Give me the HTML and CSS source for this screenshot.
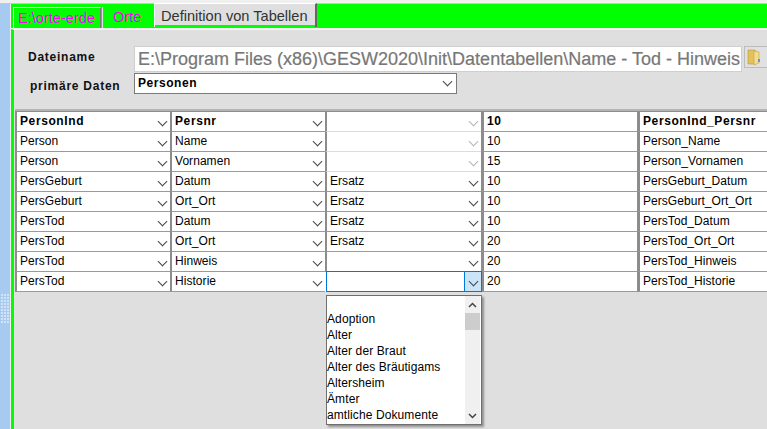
FILE: index.html
```html
<!DOCTYPE html>
<html lang="de">
<head>
    <meta charset="UTF-8">
    <meta name="viewport" content="width=device-width, initial-scale=1.0">
    <title>Definition von Tabellen</title>
    <link rel="stylesheet" href="styles.css">
</head>
<body>

<div class="fenster">
    <aside class="seitenleiste">
        <div class="griff">
            <i></i><i></i><i></i><i></i><i></i><i></i><i></i><i></i><i></i><i></i>
            <i></i><i></i><i></i><i></i><i></i><i></i><i></i><i></i><i></i><i></i>
            <i></i><i></i><i></i><i></i><i></i><i></i><i></i><i></i><i></i><i></i>
        </div>
    </aside>

    <main class="inhalt">
        <nav class="reiter-leiste">
            <div class="reiter reiter-pink reiter-eins">E:\orte-erde</div>
            <div class="reiter reiter-pink reiter-zwei">Orte</div>
            <div class="reiter reiter-aktiv">Definition von Tabellen</div>
        </nav>

        <section class="seite">
            <!-- Kopfbereich -->
            <div class="kopf">
                <div class="kopf-zeile zeile-datei">
                    <label class="kopf-label label-datei">Dateiname</label>
                    <div class="dateiname">E:\Program Files (x86)\GESW2020\Init\Datentabellen\Name - Tod - Hinweis</div>
                    <button class="ordner-knopf" type="button">
                        <svg width="14" height="18" viewBox="0 0 14 18">
                            <path d="M1 2h7l1 1v13H1z" fill="#e3c25c" stroke="#b8963a" stroke-width="0.6"/>
                            <path d="M7 3l5 1v11l-5 2z" fill="#f3dc8c" stroke="#c2a24a" stroke-width="0.6"/>
                            <rect x="11" y="11" width="2" height="3" fill="#5b9bd5"/>
                        </svg>
                    </button>
                </div>
                <div class="kopf-zeile zeile-daten">
                    <label class="kopf-label label-daten">primäre Daten</label>
                    <div class="haupt-combo">
                        <span>Personen</span>
                        <span class="haupt-knopf"></span>
                    </div>
                </div>
            </div>

            <!-- Tabelle -->
            <div class="tabelle">
                <div class="zelle kopfzeile"><span class="zelltext">PersonInd</span><span class="zell-knopf"></span></div>
                <div class="zelle kopfzeile"><span class="zelltext">Persnr</span><span class="zell-knopf"></span></div>
                <div class="zelle kopfzeile inaktiv"><span class="zelltext"></span><span class="zell-knopf"></span></div>
                <div class="zelle kopfzeile"><span class="zelltext">10</span></div>
                <div class="zelle kopfzeile"><span class="zelltext">PersonInd_Persnr</span></div>

                <div class="zelle"><span class="zelltext">Person</span><span class="zell-knopf"></span></div>
                <div class="zelle"><span class="zelltext">Name</span><span class="zell-knopf"></span></div>
                <div class="zelle inaktiv"><span class="zelltext"></span><span class="zell-knopf"></span></div>
                <div class="zelle"><span class="zelltext">10</span></div>
                <div class="zelle"><span class="zelltext">Person_Name</span></div>

                <div class="zelle"><span class="zelltext">Person</span><span class="zell-knopf"></span></div>
                <div class="zelle"><span class="zelltext">Vornamen</span><span class="zell-knopf"></span></div>
                <div class="zelle inaktiv"><span class="zelltext"></span><span class="zell-knopf"></span></div>
                <div class="zelle"><span class="zelltext">15</span></div>
                <div class="zelle"><span class="zelltext">Person_Vornamen</span></div>

                <div class="zelle"><span class="zelltext">PersGeburt</span><span class="zell-knopf"></span></div>
                <div class="zelle"><span class="zelltext">Datum</span><span class="zell-knopf"></span></div>
                <div class="zelle"><span class="zelltext">Ersatz</span><span class="zell-knopf"></span></div>
                <div class="zelle"><span class="zelltext">10</span></div>
                <div class="zelle"><span class="zelltext">PersGeburt_Datum</span></div>

                <div class="zelle"><span class="zelltext">PersGeburt</span><span class="zell-knopf"></span></div>
                <div class="zelle"><span class="zelltext">Ort_Ort</span><span class="zell-knopf"></span></div>
                <div class="zelle"><span class="zelltext">Ersatz</span><span class="zell-knopf"></span></div>
                <div class="zelle"><span class="zelltext">10</span></div>
                <div class="zelle"><span class="zelltext">PersGeburt_Ort_Ort</span></div>

                <div class="zelle"><span class="zelltext">PersTod</span><span class="zell-knopf"></span></div>
                <div class="zelle"><span class="zelltext">Datum</span><span class="zell-knopf"></span></div>
                <div class="zelle"><span class="zelltext">Ersatz</span><span class="zell-knopf"></span></div>
                <div class="zelle"><span class="zelltext">10</span></div>
                <div class="zelle"><span class="zelltext">PersTod_Datum</span></div>

                <div class="zelle"><span class="zelltext">PersTod</span><span class="zell-knopf"></span></div>
                <div class="zelle"><span class="zelltext">Ort_Ort</span><span class="zell-knopf"></span></div>
                <div class="zelle"><span class="zelltext">Ersatz</span><span class="zell-knopf"></span></div>
                <div class="zelle"><span class="zelltext">20</span></div>
                <div class="zelle"><span class="zelltext">PersTod_Ort_Ort</span></div>

                <div class="zelle"><span class="zelltext">PersTod</span><span class="zell-knopf"></span></div>
                <div class="zelle"><span class="zelltext">Hinweis</span><span class="zell-knopf"></span></div>
                <div class="zelle"><span class="zelltext"></span><span class="zell-knopf"></span></div>
                <div class="zelle"><span class="zelltext">20</span></div>
                <div class="zelle"><span class="zelltext">PersTod_Hinweis</span></div>

                <div class="zelle"><span class="zelltext">PersTod</span><span class="zell-knopf"></span></div>
                <div class="zelle"><span class="zelltext">Historie</span><span class="zell-knopf"></span></div>
                <div class="zelle offen"><span class="zelltext"></span><span class="zell-knopf"></span></div>
                <div class="zelle"><span class="zelltext">20</span></div>
                <div class="zelle"><span class="zelltext">PersTod_Historie</span></div>
            </div>

            <!-- Aufgeklappte Liste -->
            <div class="liste">
                <div class="liste-eintraege">
                    <div class="eintrag eintrag-leer"></div>
                    <div class="eintrag">Adoption</div>
                    <div class="eintrag">Alter</div>
                    <div class="eintrag">Alter der Braut</div>
                    <div class="eintrag">Alter des Bräutigams</div>
                    <div class="eintrag">Altersheim</div>
                    <div class="eintrag">Ämter</div>
                    <div class="eintrag">amtliche Dokumente</div>
                </div>
                <div class="rollbalken">
                    <svg class="roll-pfeil" width="9" height="6" viewBox="0 0 9 6"><path d="M1 5l3.5-3.5L8 5" fill="none" stroke="#444" stroke-width="1.5"/></svg>
                    <div class="roll-daumen"></div>
                    <svg class="roll-pfeil roll-unten" width="9" height="6" viewBox="0 0 9 6"><path d="M1 1l3.5 3.5L8 1" fill="none" stroke="#444" stroke-width="1.5"/></svg>
                </div>
            </div>
        </section>
    </main>
</div>

</body>
</html>
```

FILE: styles.css
```css
* {
    box-sizing: border-box;
}
html, body {
    margin: 0;
    padding: 0;
    height: 100%;
    overflow: hidden;
}
body {
    font-family: 'Liberation Sans', Arial, sans-serif;
    font-size: 12px;
    color: #000;
    background: #f0f0f0;
}
.fenster {
    display: flex;
    width: 767px;
    height: 429px;
    padding-top: 3px;
}
.seitenleiste {
    width: 10px;
    background: #a6caf0;
    border-top: 1px solid #c8c8c8;
    display: flex;
    align-items: flex-start;
    justify-content: center;
    padding-top: 290px;
}
.griff {
    display: grid;
    grid-template-columns: 2px 2px 2px;
    gap: 1px;
}
.griff i {
    width: 2px;
    height: 2px;
    background: #d3e3f6;
}
.inhalt {
    flex: 1;
    min-width: 0;
    display: flex;
    flex-direction: column;
    background: #f0f0f0;
    padding-left: 1px;
    border-top: 1px solid #c8c8c8;
}
.reiter-leiste {
    height: 24px;
    background: #00ff00;
    display: flex;
    align-items: flex-start;
    padding-left: 2px;
    flex-shrink: 0;
}
.reiter {
    font-size: 14.6px;
    line-height: 20px;
    white-space: nowrap;
}
.reiter-pink {
    color: #ff00ff;
    margin-top: 3px;
    height: 21px;
    border-left: 1px solid #fff;
    border-right: 1px solid #777;
    border-top: 1px solid #fff;
    padding: 0 0 0 4px;
}
.reiter-eins {
    width: 88px;
}
.reiter-zwei {
    width: 52px;
    padding-left: 10px;
    margin-left: 1px;
    border-top: 0;
    border-left: 1px solid #ddd;
    border-right: 0;
}
.reiter-aktiv {
    color: #333;
    background: #dfdfdf;
    height: 24px;
    width: 163px;
    margin-top: -1px;
    padding: 2px 0 0 6px;
    border-top: 1px solid #fff;
    border-left: 1px solid #fff;
    border-right: 2px solid #666;
    box-shadow: inset 0 -2px 0 #00ff00;
}
.seite {
    flex: 1;
    position: relative;
    background: #dfdfdf;
    border-left: 3px solid #00ff00;
    margin-top: 1px;
    border-top: 1px solid #f4f4f4;
    padding-left: 1px;
}
.kopf {
    height: 81px;
    padding-top: 16px;
    border-bottom: 2px solid #b4b4b4;
}
.kopf-zeile {
    display: flex;
    align-items: flex-start;
}
.kopf-label {
    font-weight: bold;
    font-size: 12px;
    letter-spacing: 0.75px;
    white-space: nowrap;
    color: #111;
    flex-shrink: 0;
}
.zeile-datei {
    height: 26px;
}
.label-datei {
    width: 119px;
    padding: 4px 0 0 13px;
}
.dateiname {
    width: 608px;
    height: 26px;
    flex-shrink: 0;
    background: #fff;
    border: 1px solid #cfcfcf;
    color: #777;
    font-size: 18px;
    line-height: 24px;
    padding-left: 3px;
    overflow: hidden;
    white-space: nowrap;
    -webkit-text-stroke: 0.2px #777;
}
.ordner-knopf {
    width: 26px;
    height: 22px;
    flex-shrink: 0;
    margin: 0 0 0 2px;
    padding: 1px 0 0 2px;
    background: #e1e1e1;
    border: 1px solid #bcbcbc;
    display: flex;
    align-items: flex-start;
}
.zeile-daten {
    margin-top: 1px;
    height: 21px;
}
.label-daten {
    width: 119px;
    padding: 6px 0 0 15px;
}
.haupt-combo {
    width: 323px;
    height: 21px;
    background: #fff;
    border: 1px solid #7a7a7a;
    display: flex;
    justify-content: space-between;
    padding: 2px 4px 0 3px;
    font-weight: bold;
    line-height: 15px;
    letter-spacing: 0.55px;
}
.haupt-knopf::after, .zell-knopf::after {
    content: "";
    display: block;
    width: 6px;
    height: 6px;
    border-right: 1px solid #444;
    border-bottom: 1px solid #444;
    transform: rotate(45deg);
}
.haupt-knopf {
    width: 10px;
    padding: 2px 0 0 2px;
}
.tabelle {
    display: grid;
    grid-template-columns: 155px 155px 156px 156px 140px;
    grid-auto-rows: 20px;
    border-top: 1px solid #8c8c8c;
    background: #fff;
    width: 752px;
}
.zelle {
    position: relative;
    background: #fff;
    border-left: 2px solid #8c8c8c;
    border-bottom: 1px solid #9a9a9a;
    display: flex;
    justify-content: space-between;
    overflow: hidden;
}
.zelle:nth-child(5n+4), .zelle:nth-child(5n+5) {
    border-left: 3px solid #8c8c8c;
}
.zelltext {
    padding: 2px 0 0 3px;
    line-height: 15px;
    letter-spacing: 0.05px;
    white-space: nowrap;
}
.kopfzeile .zelltext {
    font-weight: bold;
    letter-spacing: 0.6px;
}
.inaktiv {
    border-bottom-color: #dcdcdc;
}
.inaktiv .zell-knopf::after {
    border-color: #b5b5b5;
}
.zell-knopf {
    width: 17px;
    flex-shrink: 0;
    padding: 6px 0 0 6px;
}
.offen {
    margin: -1px -1px 0 1px;
    z-index: 1;
    border: 1px solid #0078d7;
}
.offen .zell-knopf {
    background: #cce4f7;
    border-left: 1px solid #0078d7;
    padding-left: 5px;
}
.liste {
    position: absolute;
    left: 312px;
    top: 265px;
    width: 156px;
    height: 130px;
    background: #fff;
    border: 1px solid #6e6e6e;
    box-shadow: 2px 2px 2px rgba(0, 0, 0, 0.35);
    display: flex;
    z-index: 2;
}
.liste-eintraege {
    flex: 1;
}
.eintrag {
    height: 16px;
    line-height: 16px;
    letter-spacing: 0.1px;
    white-space: nowrap;
}
.eintrag-leer {
    height: 15px;
}
.rollbalken {
    position: relative;
    width: 15px;
    margin-right: 1px;
    background: #f0f0f0;
}
.roll-pfeil {
    position: absolute;
    left: 3px;
    top: 6px;
}
.roll-unten {
    top: auto;
    bottom: 5px;
}
.roll-daumen {
    position: absolute;
    left: 0;
    top: 17px;
    width: 15px;
    height: 17px;
    background: #cdcdcd;
}
```
